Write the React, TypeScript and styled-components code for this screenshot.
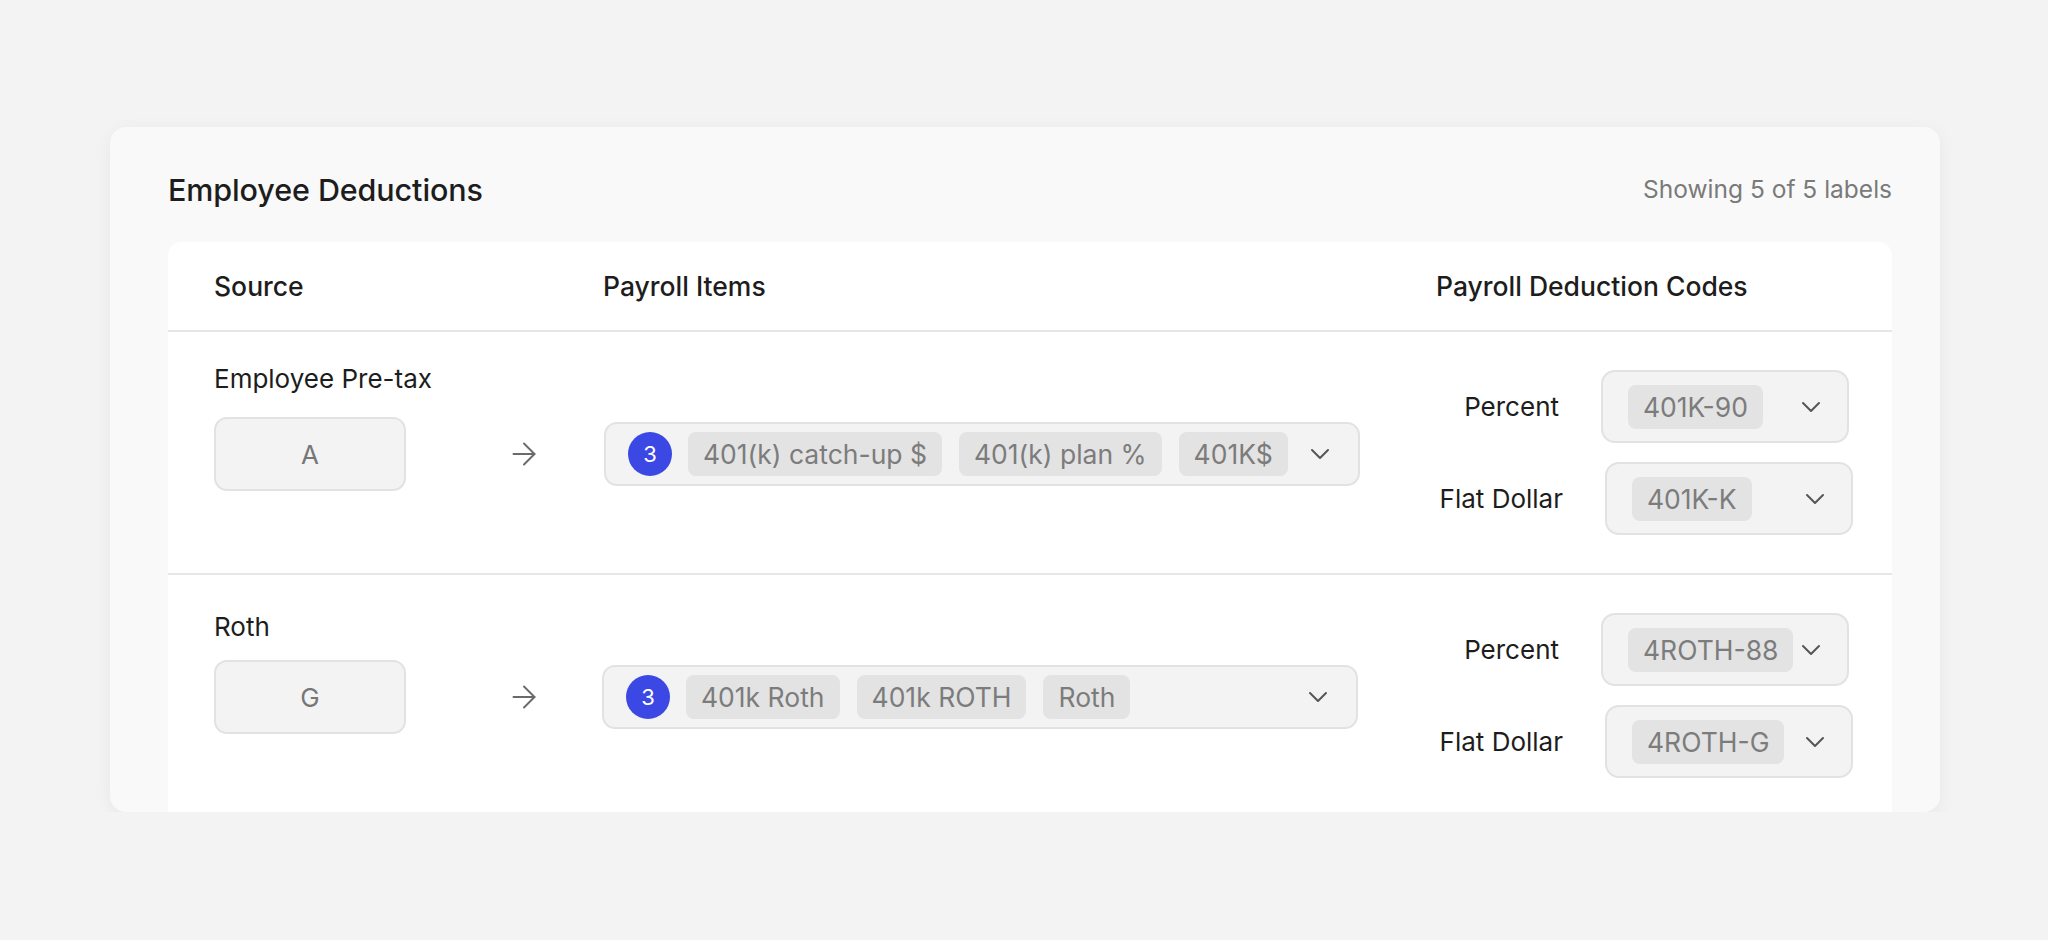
import { createGlobalStyle, styled } from "styled-components";
import { ArrowRight, ChevronDown } from "lucide-react";

const GlobalStyle = createGlobalStyle`
  * {
    box-sizing: border-box;
  }
  body {
    margin: 0;
    background: #f3f3f3;
    font-family: Inter, "Noto Sans", sans-serif;
    color: #1d1d1d;
  }
`;

const Page = styled.div`
  padding: 127px 108px 0 110px;
`;

const Card = styled.section`
  height: 685px;
  background: #f9f9f9;
  border-radius: 16px;
  box-shadow: 0 4px 18px rgba(0, 0, 0, 0.05);
  padding: 45px 48px 0 58px;
  overflow: hidden;
  display: flex;
  flex-direction: column;
`;

const CardHeader = styled.div`
  display: flex;
  align-items: center;
  justify-content: space-between;
  height: 34px;
  margin-bottom: 36px;
`;

const Title = styled.h2`
  margin: 0;
  font-size: 30.5px;
  font-weight: 500;
  letter-spacing: -0.1px;
`;

const Counter = styled.span`
  font-size: 24.5px;
  color: #7a7a7a;
`;

const Panel = styled.div`
  flex: 1;
  background: #ffffff;
  border-radius: 14px 14px 0 0;
`;

const HeadRow = styled.div`
  display: grid;
  grid-template-columns: 389px 833px 1fr;
  align-items: center;
  height: 90px;
  padding: 0 39px 0 46px;
  border-bottom: 2px solid #e6e6e6;
`;

const HeadCell = styled.div`
  font-size: 26.5px;
  font-weight: 500;
`;

const Row = styled.div`
  display: flex;
  align-items: flex-start;
  padding: 31px 39px 38px 46px;
  border-bottom: 2px solid #e6e6e6;
`;

const Left = styled.div`
  flex: 1;
  display: flex;
  flex-direction: column;
`;

const SourceLabel = styled.div<{ $drop: number }>`
  font-size: 26px;
  line-height: 32px;
  margin-top: ${(p) => p.$drop}px;
  margin-bottom: ${(p) => 22 - p.$drop}px;
`;

const Line = styled.div`
  display: flex;
  align-items: center;
`;

const SourceBox = styled.div`
  width: 192px;
  height: 74px;
  display: flex;
  align-items: center;
  justify-content: center;
  background: #f3f3f3;
  border: 2px solid #e2e2e2;
  border-radius: 13px;
  font-size: 26px;
  color: #777;
`;

const ArrowWrap = styled.div<{ $after: number }>`
  display: flex;
  margin-left: 100px;
  margin-right: ${(p) => p.$after}px;
  color: #6a6a6a;
`;

const Multi = styled.div`
  width: 756px;
  height: 64px;
  display: flex;
  align-items: center;
  gap: 16px;
  padding: 0 22px 0 22px;
  background: #f3f3f3;
  border: 2px solid #e2e2e2;
  border-radius: 13px;
`;

const CountBadge = styled.span`
  width: 44px;
  height: 44px;
  border-radius: 50%;
  background: #3c48e4;
  color: #fff;
  font-size: 22px;
  display: flex;
  align-items: center;
  justify-content: center;
  flex-shrink: 0;
`;

const Chips = styled.div`
  display: flex;
  gap: 17px;
  flex: 1;
`;

const Chip = styled.span`
  height: 44px;
  padding: 0 15px;
  display: inline-flex;
  align-items: center;
  background: #e3e3e3;
  border-radius: 8px;
  font-size: 26.5px;
  color: #7c7c7c;
  white-space: nowrap;
`;

const Chevron = styled(ChevronDown)`
  color: #555;
  flex-shrink: 0;
`;

const Codes = styled.div`
  width: 417px;
  margin-top: 7px;
  display: flex;
  flex-direction: column;
  gap: 19px;
`;

const CodeRow = styled.div<{ $inset: number }>`
  display: flex;
  align-items: center;
  justify-content: flex-end;
  gap: 42px;
  margin-right: ${(p) => p.$inset}px;
`;

const CodeLabel = styled.span`
  font-size: 26px;
  text-align: right;
`;

const CodeSelect = styled.div`
  width: 248px;
  height: 73px;
  display: flex;
  align-items: center;
  justify-content: space-between;
  padding: 0 20px 0 25px;
  background: #f3f3f3;
  border: 2px solid #e2e2e2;
  border-radius: 14px;
`;

type Code = { label: string; value: string; inset: number };

type Deduction = {
  source: string;
  letter: string;
  drop: number;
  items: string[];
  after: number;
  codes: Code[];
};

const rows: Deduction[] = [
  {
    source: "Employee Pre-tax",
    letter: "A",
    drop: 0,
    items: ["401(k) catch-up $", "401(k) plan %", "401K$"],
    after: 62,
    codes: [
      { label: "Percent", value: "401K-90", inset: 4 },
      { label: "Flat Dollar", value: "401K-K", inset: 0 },
    ],
  },
  {
    source: "Roth",
    letter: "G",
    drop: 5,
    items: ["401k Roth", "401k ROTH", "Roth"],
    after: 60,
    codes: [
      { label: "Percent", value: "4ROTH-88", inset: 4 },
      { label: "Flat Dollar", value: "4ROTH-G", inset: 0 },
    ],
  },
];

export default function App() {
  return (
    <>
      <GlobalStyle />
      <Page>
        <Card>
          <CardHeader>
            <Title>Employee Deductions</Title>
            <Counter>Showing 5 of 5 labels</Counter>
          </CardHeader>
          <Panel>
            <HeadRow>
              <HeadCell>Source</HeadCell>
              <HeadCell>Payroll Items</HeadCell>
              <HeadCell>Payroll Deduction Codes</HeadCell>
            </HeadRow>
            {rows.map((row) => (
              <Row key={row.source}>
                <Left>
                  <SourceLabel $drop={row.drop}>{row.source}</SourceLabel>
                  <Line>
                    <SourceBox>{row.letter}</SourceBox>
                    <ArrowWrap $after={row.after}>
                      <ArrowRight size={36} strokeWidth={1.3} />
                    </ArrowWrap>
                    <Multi>
                      <CountBadge>{row.items.length}</CountBadge>
                      <Chips>
                        {row.items.map((item) => (
                          <Chip key={item}>{item}</Chip>
                        ))}
                      </Chips>
                      <Chevron size={32} strokeWidth={1.5} />
                    </Multi>
                  </Line>
                </Left>
                <Codes>
                  {row.codes.map((code) => (
                    <CodeRow key={code.label} $inset={code.inset}>
                      <CodeLabel>{code.label}</CodeLabel>
                      <CodeSelect>
                        <Chip>{code.value}</Chip>
                        <Chevron size={32} strokeWidth={1.5} />
                      </CodeSelect>
                    </CodeRow>
                  ))}
                </Codes>
              </Row>
            ))}
          </Panel>
        </Card>
      </Page>
    </>
  );
}
